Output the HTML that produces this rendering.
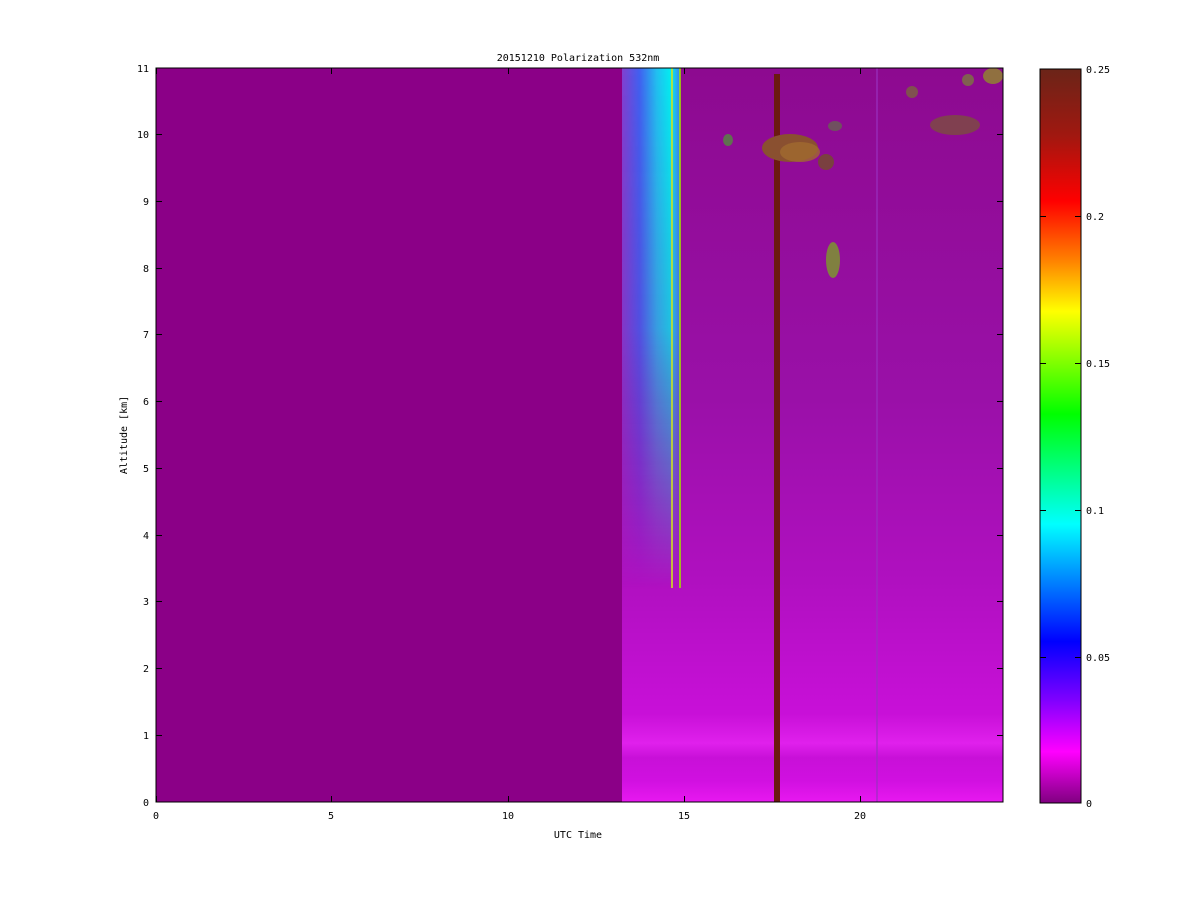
<!DOCTYPE html>
<html><head><style>
html,body{margin:0;padding:0;background:#fff;}
text{font-family:"DejaVu Sans Mono","Liberation Mono",monospace;font-size:10px;fill:#000;}
</style></head><body>
<svg width="1200" height="901" viewBox="0 0 1200 901" xmlns="http://www.w3.org/2000/svg">
<defs>
<linearGradient id="cb" x1="0" y1="0" x2="0" y2="1">
<stop offset="0" stop-color="#6b2418"/>
<stop offset="0.09" stop-color="#a01810"/>
<stop offset="0.18" stop-color="#ff0000"/>
<stop offset="0.26" stop-color="#ff8000"/>
<stop offset="0.33" stop-color="#ffff00"/>
<stop offset="0.47" stop-color="#00ff00"/>
<stop offset="0.62" stop-color="#00ffff"/>
<stop offset="0.78" stop-color="#0000ff"/>
<stop offset="0.86" stop-color="#8000ff"/>
<stop offset="0.93" stop-color="#ff00ff"/>
<stop offset="1" stop-color="#800080"/>
</linearGradient>
<linearGradient id="bg" x1="0" y1="0" x2="0" y2="1">
<stop offset="0" stop-color="#8d0a90"/>
<stop offset="0.45" stop-color="#9a10a8"/>
<stop offset="0.7" stop-color="#b010c0"/>
<stop offset="0.88" stop-color="#c810d8"/>
<stop offset="0.92" stop-color="#e020ec"/>
<stop offset="0.94" stop-color="#c810d8"/>
<stop offset="0.97" stop-color="#d010e0"/>
<stop offset="1" stop-color="#e818f0"/>
</linearGradient>
<linearGradient id="cyh" x1="0" y1="0" x2="1" y2="0">
<stop offset="0" stop-color="#8040d0"/>
<stop offset="0.3" stop-color="#4060f0"/>
<stop offset="0.6" stop-color="#20c0f0"/>
<stop offset="0.85" stop-color="#00f0f0"/>
<stop offset="1" stop-color="#4080f0"/>
</linearGradient>
<linearGradient id="fade" x1="0" y1="0" x2="0" y2="1">
<stop offset="0" stop-color="#fff" stop-opacity="1"/>
<stop offset="0.5" stop-color="#fff" stop-opacity="0.8"/>
<stop offset="1" stop-color="#fff" stop-opacity="0"/>
</linearGradient>
<mask id="m"><rect x="622" y="68" width="60" height="520" fill="url(#fade)"/></mask>
</defs>
<text x="578" y="61" text-anchor="middle">20151210 Polarization 532nm</text>
<rect x="156" y="68" width="847" height="734" fill="#8b0087"/>
<rect x="622" y="68" width="381" height="734" fill="url(#bg)"/>
<rect x="622" y="68" width="58" height="520" fill="url(#cyh)" mask="url(#m)"/>
<rect x="671" y="68" width="2" height="520" fill="#d0e020" opacity="0.8"/>
<rect x="679" y="68" width="2" height="520" fill="#a0e000" opacity="0.8"/>
<rect x="774" y="74" width="6" height="728" fill="#6b1a10"/>
<rect x="876" y="68" width="2" height="734" fill="#9a30c0" opacity="0.6"/>
<ellipse cx="790" cy="148" rx="28" ry="14" fill="#8a5030"/>
<ellipse cx="800" cy="152" rx="20" ry="10" fill="#a06a30" opacity="0.8"/>
<ellipse cx="826" cy="162" rx="8" ry="8" fill="#7a4040"/>
<ellipse cx="833" cy="260" rx="7" ry="18" fill="#808040"/>
<ellipse cx="955" cy="125" rx="25" ry="10" fill="#804050"/>
<ellipse cx="835" cy="126" rx="7" ry="5" fill="#705060"/>
<ellipse cx="728" cy="140" rx="5" ry="6" fill="#607050"/>
<ellipse cx="912" cy="92" rx="6" ry="6" fill="#805050"/>
<ellipse cx="993" cy="76" rx="10" ry="8" fill="#907040"/>
<ellipse cx="968" cy="80" rx="6" ry="6" fill="#806050"/>
<rect x="156" y="68" width="847" height="734" fill="none" stroke="#000" stroke-width="1"/>
<g stroke="#000" stroke-width="1">
<path d="M156.5 802v-6M331.5 802v-6M508.5 802v-6M684.5 802v-6M860.5 802v-6M156.5 68v6M331.5 68v6M508.5 68v6M684.5 68v6M860.5 68v6"/>
<path d="M156 735.5h6M156 668.5h6M156 601.5h6M156 535.5h6M156 468.5h6M156 401.5h6M156 334.5h6M156 268.5h6M156 201.5h6M156 134.5h6M1003 735.5h-6M1003 668.5h-6M1003 601.5h-6M1003 535.5h-6M1003 468.5h-6M1003 401.5h-6M1003 334.5h-6M1003 268.5h-6M1003 201.5h-6M1003 134.5h-6"/>
</g>
<g text-anchor="middle">
<text x="156" y="819">0</text><text x="331" y="819">5</text><text x="508" y="819">10</text><text x="684" y="819">15</text><text x="860" y="819">20</text>
</g>
<g text-anchor="end">
<text x="149" y="806">0</text><text x="149" y="739">1</text><text x="149" y="672">2</text><text x="149" y="605">3</text><text x="149" y="539">4</text><text x="149" y="472">5</text><text x="149" y="405">6</text><text x="149" y="338">7</text><text x="149" y="272">8</text><text x="149" y="205">9</text><text x="149" y="138">10</text><text x="149" y="72">11</text>
</g>
<text x="578" y="838" text-anchor="middle">UTC Time</text>
<text x="127" y="435" text-anchor="middle" transform="rotate(-90 127 435)">Altitude [km]</text>
<rect x="1040" y="69" width="41" height="734" fill="url(#cb)" stroke="#000" stroke-width="1"/>
<g stroke="#000"><path d="M1040 216.5h6M1081 216.5h-6M1040 363.5h6M1081 363.5h-6M1040 510.5h6M1081 510.5h-6M1040 657.5h6M1081 657.5h-6"/></g>
<text x="1086" y="73">0.25</text><text x="1086" y="220">0.2</text><text x="1086" y="367">0.15</text><text x="1086" y="514">0.1</text><text x="1086" y="661">0.05</text><text x="1086" y="807">0</text>
</svg>
</body></html>
